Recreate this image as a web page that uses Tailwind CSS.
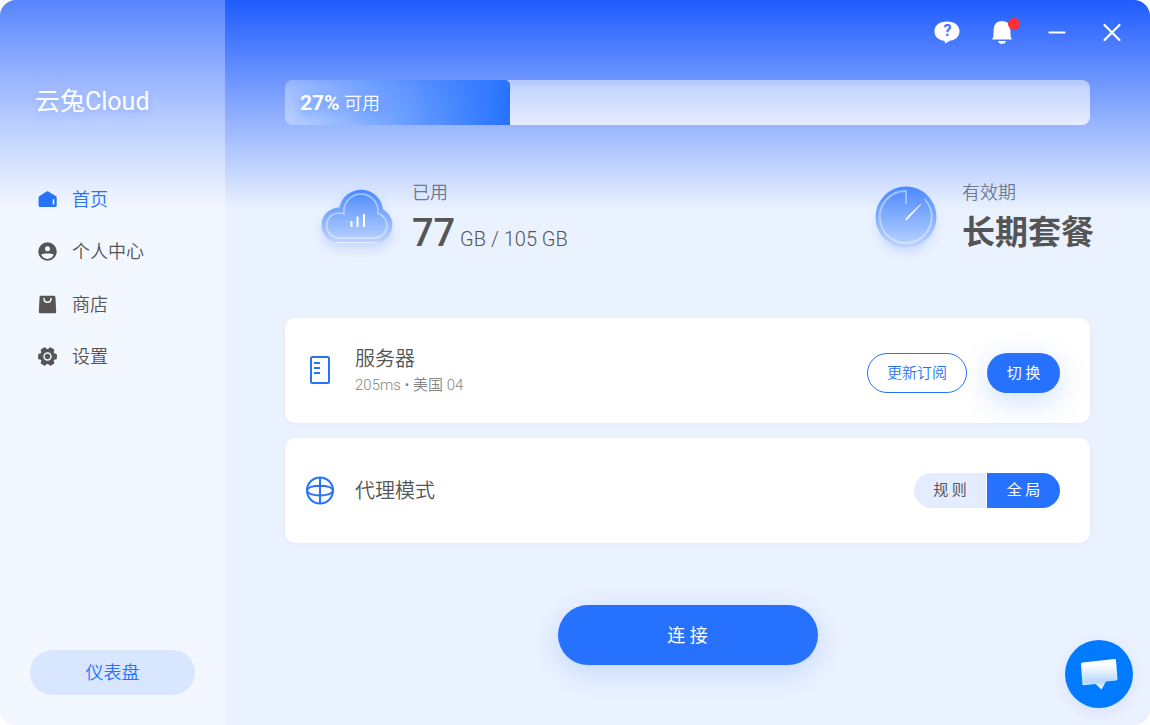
<!DOCTYPE html>
<html lang="zh-CN">
<head>
<meta charset="utf-8">
<meta name="viewport" content="width=device-width, initial-scale=1">
<title>云兔Cloud</title>
<script src="https://cdn.jsdelivr.net/npm/@tailwindcss/browser@4"></script>
</head>
<body class="min-h-screen bg-white font-['Roboto','Noto_Sans_CJK_SC',sans-serif] text-[#555555]">
<div class="relative flex min-h-screen overflow-hidden rounded-[16px] bg-[#ebf2ff] bg-[linear-gradient(#1f5cff,#ebf2ff_210px)]">

  <aside class="flex w-[225px] shrink-0 flex-col bg-[linear-gradient(rgb(255_255_255/0.25),rgb(255_255_255/0.4)_210px)]">
    <h1 class="px-[35px] pt-[82px] text-[25px] leading-10 text-white [text-shadow:0_3px_6px_rgb(31_92_255/0.2)]">云兔Cloud</h1>
    <nav class="mt-[51px] grid h-[210px] grid-rows-4 px-[38px] text-[18px] font-[350]">
      <a href="#" class="flex items-center gap-[15px] text-[#2672ff]">
        <svg class="size-[19px]" viewBox="0 0 19 19" fill="currentColor" aria-hidden="true"><path fill-rule="evenodd" d="M8.600 1.500q.9-.7 1.800 0l7.300 4.600q1 .7 1 1.600v7.800q0 1.600-1.600 1.600H2.200q-1.600 0-1.600-1.600V7.700q0-1 1-1.600zM14.700 9.300v5.200h1.600V9.300z"/></svg>首页</a>
      <a href="#" class="flex items-center gap-[15px]">
        <svg class="size-[19px]" viewBox="0 0 19 19" fill="currentColor" aria-hidden="true"><path fill-rule="evenodd" d="M9.500.3a9.200 9.200 0 1 0 0 18.400 9.200 9.200 0 0 0 0-18.400zM9.500 4.200a2.500 2.500 0 1 1 0 5 2.500 2.500 0 0 1 0-5zM3.200 12.500C5 11.800 7 11.600 9.500 11.600s4.500.2 6.300.9c-1 2.700-3.400 4.400-6.300 4.400s-5.300-1.700-6.300-4.400z"/></svg>个人中心</a>
      <a href="#" class="flex items-center gap-[15px]">
        <svg class="size-[19px]" viewBox="0 0 19 19" fill="currentColor" aria-hidden="true"><path d="M3 .8h13q1.300 0 1.400 1.300l.8 14.600q.1 1.500-1.400 1.500H2.200q-1.500 0-1.400-1.500l.8-14.600Q1.700.8 3 .8z"/><path d="M6 3.600c0 5 7 5 7 0" fill="none" stroke="#f3f8ff" stroke-width="1.500" stroke-linecap="round"/></svg>商店</a>
      <a href="#" class="flex items-center gap-[15px]">
        <svg class="size-[19px]" viewBox="0 0 19 19" fill="currentColor" aria-hidden="true"><circle cx="9.500" cy="9.500" r="7.600"/><rect x=".1" y="6.500" width="18.800" height="6" rx="1.500"/><rect x=".1" y="6.500" width="18.800" height="6" rx="1.500" transform="rotate(60 9.500 9.500)"/><rect x=".1" y="6.500" width="18.800" height="6" rx="1.500" transform="rotate(120 9.500 9.500)"/><circle cx="9.500" cy="9.500" r="3.500" fill="none" stroke="#f3f8ff" stroke-width="1.500"/></svg>设置</a>
    </nav>
    <button type="button" class="mx-[30px] mt-auto mb-[30px] h-[45px] rounded-full bg-[#d9e6ff] text-[18px] font-[350] text-[#2672ff]">仪表盘</button>
  </aside>

  <main class="flex min-w-0 flex-1 flex-col">
    <header class="flex h-16 items-center justify-end gap-[25px] pr-[23px] text-white">
      <button type="button" aria-label="帮助" class="flex size-[30px] items-center justify-center">
        <svg class="size-[26px]" viewBox="0 0 26 26" fill="currentColor"><path d="M13 2.500c8 0 12.500 4 12.500 9.800 0 5.200-3.800 8.700-9 9.300L11 24.500l-.3-2.600C4.200 21.200.5 17.700.5 12.300.5 6.500 5 2.500 13 2.500z"/><text x="13.400" y="17.300" text-anchor="middle" font-family="Roboto" font-size="16" font-weight="700" fill="#3f73ff">?</text></svg>
      </button>
      <button type="button" aria-label="通知" class="relative flex size-[30px] items-center justify-center">
        <svg class="size-[26px]" viewBox="0 0 26 26" fill="currentColor"><path d="M13 2c5.300 0 8 3.600 8.300 8l.4 7.500q.1 1.300 1 2.200.5.900-.4.900H3.700q-.9 0-.4-.9.900-.9 1-2.200L4.700 10C5 5.600 7.700 2 13 2zM9 22h8c-.5 2-2 2.800-4 2.800S9.500 24 9 22z"/></svg>
        <span class="absolute -right-[3px] top-px size-3 rounded-full bg-[#ff2d35]"></span>
      </button>
      <button type="button" aria-label="最小化" class="flex size-[30px] items-center justify-center">
        <svg class="size-5" viewBox="0 0 20 20" fill="none" stroke="currentColor" stroke-width="2.200" stroke-linecap="round"><path d="M2.500 10.500h15"/></svg>
      </button>
      <button type="button" aria-label="关闭" class="flex size-[30px] items-center justify-center">
        <svg class="size-5" viewBox="0 0 20 20" fill="none" stroke="currentColor" stroke-width="2.200" stroke-linecap="round"><path d="m2.500 3 15 15m0-15-15 15"/></svg>
      </button>
    </header>

    <div class="mt-4 flex flex-1 flex-col px-[60px]">
      <div role="progressbar" aria-label="可用流量" aria-valuenow="27" aria-valuemin="0" aria-valuemax="100" class="h-[45px] overflow-hidden rounded-[8px] bg-[linear-gradient(rgb(255_255_255/0.5),rgb(255_255_255/0.5)_5px,rgb(255_255_255/0.56)_5px,rgb(255_255_255/0.75))]">
        <div class="flex h-full items-center rounded-tr-[5px] bg-[linear-gradient(90deg,rgb(38_114_255/0.22),#2672ff)] pl-[15px] text-[18px] text-white [text-shadow:0_3px_8px_rgb(38_114_255/0.5)]" style="width:28%">
          <span class="pt-[3px] font-[350] whitespace-pre"><strong class="text-[21px] font-bold">27%</strong> 可用</span>
        </div>
      </div>

      <section class="mt-[52px] -mr-1 flex h-[86px] items-start justify-between">
        <div class="flex">
          <svg class="mt-1 ml-[25px] h-[86px] w-[94px]" viewBox="0 0 94 86" fill="none" aria-hidden="true">
            <defs><linearGradient id="cloudFill" x1="0" y1="8" x2="0" y2="62" gradientUnits="userSpaceOnUse"><stop stop-color="#4a89ff"/><stop offset="1" stop-color="#bdd4ff"/></linearGradient>
            <filter id="soft" x="-30%" y="-30%" width="160%" height="170%"><feGaussianBlur stdDeviation="6"/></filter></defs>
            <path d="M29.500 26.500A22 22 0 0 1 73 28.500 17.500 17.500 0 0 1 65 61.500H28.500A17.500 17.500 0 1 1 29.500 26.500z" transform="translate(0 6)" fill="#2672ff" opacity=".2" filter="url(#soft)"/>
            <path d="M29.500 26.500A22 22 0 0 1 73 28.500 17.500 17.500 0 0 1 65 61.500H28.500A17.500 17.500 0 1 1 29.500 26.500z" fill="url(#cloudFill)"/>
            <path d="M34 33V30A17 17 0 0 1 68 30V32.500A12.500 12.500 0 0 1 65 57H28.500A12.500 12.500 0 1 1 34 33z" stroke="#fff" stroke-opacity=".5" stroke-width="1.500"/>
            <path d="M25 61.500h42" stroke="#fff" stroke-opacity=".6"/>
            <path d="M41.500 40v6M47.500 35.500v10.500M54 33v13" stroke="#fff" stroke-width="2"/>
          </svg>
          <div class="ml-2">
            <p class="text-[18px] leading-8 font-[350] text-[#70788a]">已用</p>
            <p class="mt-1 text-[20px] leading-10 font-light"><strong class="text-[38px] font-medium">77</strong> GB / 105 GB</p>
          </div>
        </div>
        <div class="flex">
          <svg class="mt-px h-[86px] w-[78px]" viewBox="0 0 78 86" fill="none" aria-hidden="true">
            <defs><linearGradient id="dialFill" x1="0" y1="9" x2="0" y2="69" gradientUnits="userSpaceOnUse"><stop stop-color="#4a89ff"/><stop offset="1" stop-color="#bdd4ff"/></linearGradient></defs>
            <circle cx="39" cy="46" r="28" fill="#2672ff" opacity=".2" filter="url(#soft)"/>
            <circle cx="39" cy="39" r="30.500" fill="url(#dialFill)"/>
            <path d="M39 26V13A26 26 0 1 0 57.500 21" stroke="#fff" stroke-opacity=".45" stroke-width="1.800"/>
            <path d="M38.500 41.500 40.500 39 53.500 26.500 40 41.500q-1 .8-1.500 0z" fill="#fff" stroke="#fff"/>
          </svg>
          <div class="ml-[17px]">
            <p class="text-[18px] leading-8 font-[350] text-[#70788a]">有效期</p>
            <p class="text-[33px] leading-[48px] font-bold">长期套餐</p>
          </div>
        </div>
      </section>

      <section class="mt-[55px] flex h-[105px] items-center rounded-[10px] bg-white pr-[30px] pb-px pl-5 shadow-[0_1px_4px_rgb(38_80_200/0.06)]">
        <svg class="size-[30px]" viewBox="0 0 30 30" fill="none" stroke="#2672ff" stroke-width="2" aria-hidden="true"><rect x="6" y="2" width="18" height="26" rx="1.500"/><path d="M9 8h6M9 13h6M9 18h6"/></svg>
        <div class="ml-5 flex-1">
          <h2 class="text-[20px] leading-[30px] font-[350]">服务器</h2>
          <p class="text-[15px] leading-[22px] font-[350] text-[#858585]">205ms • 美国 04</p>
        </div>
        <div class="mt-[6px] flex gap-5">
          <button type="button" class="h-10 w-[100px] rounded-full border border-[#2672ff] text-[15px] font-[350] text-[#2672ff]">更新订阅</button>
          <button type="button" class="h-10 w-[73px] rounded-full bg-[#2672ff] text-[15px] text-white shadow-[0_8px_30px_rgb(38_114_255/0.22)]">切 换</button>
        </div>
      </section>

      <section class="mt-[15px] flex h-[105px] items-center rounded-[10px] bg-white pr-[30px] pl-5 shadow-[0_1px_4px_rgb(38_80_200/0.06)]">
        <svg class="size-[30px]" viewBox="0 0 30 30" fill="none" stroke="#2672ff" stroke-width="2" aria-hidden="true"><circle cx="15" cy="14.500" r="13"/><path d="M15 1.500v26M2 14.500c0-6.500 26-6.500 26 0s-26 6.500-26 0z"/></svg>
        <h2 class="ml-5 flex-1 text-[20px] leading-[30px] font-[350]">代理模式</h2>
        <div class="flex gap-px text-[15px]">
          <button type="button" class="h-[35px] w-[72px] rounded-l-full bg-[#e4edff]">规 则</button>
          <button type="button" class="h-[35px] w-[73px] rounded-r-full bg-[#2672ff] text-white">全 局</button>
        </div>
      </section>

      <button type="button" class="mx-auto mt-[62px] h-[60px] w-[260px] rounded-full bg-[#2672ff] text-[18px] text-white shadow-[0_8px_30px_rgb(38_114_255/0.2)]">连 接</button>
    </div>
  </main>

  <button type="button" aria-label="在线客服" class="absolute right-[17px] bottom-[17px] flex size-[68px] items-center justify-center rounded-full bg-[#007aff] shadow-[0_4px_16px_rgb(38_80_255/0.1)]">
    <svg class="h-8 w-[38px]" viewBox="0 0 38 32" aria-hidden="true"><defs><linearGradient id="bubble" x1="0" y1="0" x2="0" y2="1"><stop offset=".2" stop-color="#fff"/><stop offset=".75" stop-color="#b5d8ff"/><stop offset="1" stop-color="#fff"/></linearGradient></defs><path d="M2.500 4.500 34.500 1q1.300-.1 1.500 1.200L37.500 21q.1 1.200-1 1.400l-10.500 1L21.500 31.500 15.500 26l-11.700 1.200q-1.400.1-1.500-1.300L1 6.200q0-1.500 1.500-1.700z" fill="url(#bubble)"/></svg>
  </button>
</div>
</body>
</html>
